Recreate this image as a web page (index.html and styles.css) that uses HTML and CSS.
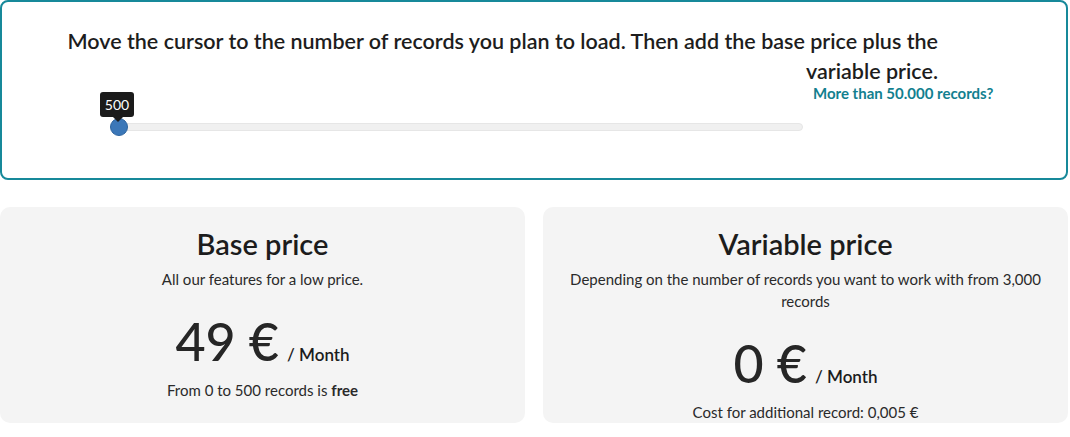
FILE: index.html
```html
<!DOCTYPE html>
<html lang="en">
<head>
<meta charset="utf-8">
<title>Pricing</title>
<link rel="stylesheet" href="styles.css">
</head>
<body>
<div class="page">
  <section class="calc">
    <h2 class="calc-title">Move the cursor to the number of records you plan to load. Then add the base price plus the variable price.</h2>
    <div class="calc-row">
      <div class="slider-col">
        <div class="slider">
          <div class="track"></div>
          <div class="thumb-wrap">
            <div class="tip">500</div>
            <div class="thumb"></div>
          </div>
        </div>
      </div>
      <a class="more-link" href="#">More than 50.000 records?</a>
    </div>
  </section>

  <div class="cards">
    <div class="card">
      <h3 class="card-title">Base price</h3>
      <p class="card-desc">All our features for a low price.</p>
      <div class="price"><span class="amount">49 €</span><span class="per">/ Month</span></div>
      <p class="card-foot">From 0 to 500 records is <b>free</b></p>
    </div>
    <div class="card">
      <h3 class="card-title">Variable price</h3>
      <p class="card-desc">Depending on the number of records you want to work with from 3,000 records</p>
      <div class="price"><span class="amount">0 €</span><span class="per">/ Month</span></div>
      <p class="card-foot">Cost for additional record: 0,005 €</p>
    </div>
  </div>
</div>
</body>
</html>
```

FILE: styles.css
```css
* { box-sizing: border-box; }
html, body { margin: 0; padding: 0; background: #fff; }
body {
  font-family: "Lato", "Open Sans", sans-serif;
  color: #222;
}
.page { width: 1068px; }

.calc {
  border: 2px solid #17899a;
  border-radius: 8px;
  height: 180px;
  padding: 24px 0 0 0;
}
.calc-title {
  margin: 0 128px 0 62px;
  font-size: 21.5px;
  font-weight: 600;
  line-height: 30px;
  text-align: right;
  color: #1d1d1d;
}
.calc-row {
  display: flex;
  align-items: flex-start;
}
.slider-col {
  width: 801px;
  padding: 6px 0 0 110px;
}
.slider {
  position: relative;
  height: 45px;
}
.track {
  position: absolute;
  left: 0;
  right: 0;
  top: 31px;
  height: 8px;
  background: #f0f0f0;
  border: 1px solid #e6e6e6;
  border-radius: 4px;
}
.thumb-wrap {
  position: absolute;
  left: -11px;
  top: 0;
  width: 36px;
  display: flex;
  flex-direction: column;
  align-items: center;
}
.tip {
  position: relative;
  margin-left: -4px;
  background: #1b1b1b;
  color: #fff;
  font-size: 14px;
  line-height: 25px;
  height: 25px;
  padding: 0 5px;
  border-radius: 3px;
}
.tip::after {
  content: "";
  position: absolute;
  left: 50%;
  bottom: -5px;
  margin-left: -4px;
  border-left: 5px solid transparent;
  border-right: 5px solid transparent;
  border-top: 5px solid #1b1b1b;
}
.thumb {
  margin-top: 1px;
  width: 18px;
  height: 18px;
  border-radius: 50%;
  background: #3b77b8;
  border: 1px solid #2d649f;
}
.more-link {
  margin-left: 10px;
  color: #12808f;
  font-size: 15px;
  font-weight: 700;
  line-height: 14px;
  text-decoration: none;
}

.cards {
  display: grid;
  grid-template-columns: 525px 525px;
  column-gap: 18px;
  margin-top: 27px;
}
.card {
  background: #f4f4f4;
  border-radius: 10px;
  height: 216px;
  padding: 19px 20px 0;
  text-align: center;
}
.card-title {
  margin: 0;
  font-size: 29px;
  font-weight: 600;
  line-height: 36px;
  color: #1c1c1c;
}
.card-desc {
  margin: 6px 0 0;
  font-size: 15px;
  line-height: 22px;
  color: #2a2a2a;
}
.price {
  margin-top: 21px;
  height: 60px;
  line-height: 60px;
}
.amount {
  font-size: 52px;
  font-weight: 500;
  color: #262626;
}
.per {
  margin-left: 8px;
  font-size: 17px;
  font-weight: 600;
  color: #1c1c1c;
}
.card-foot {
  margin: 8px 0 0;
  font-size: 15px;
  line-height: 22px;
  color: #2a2a2a;
}
.card-foot b { font-weight: 700; }
```
